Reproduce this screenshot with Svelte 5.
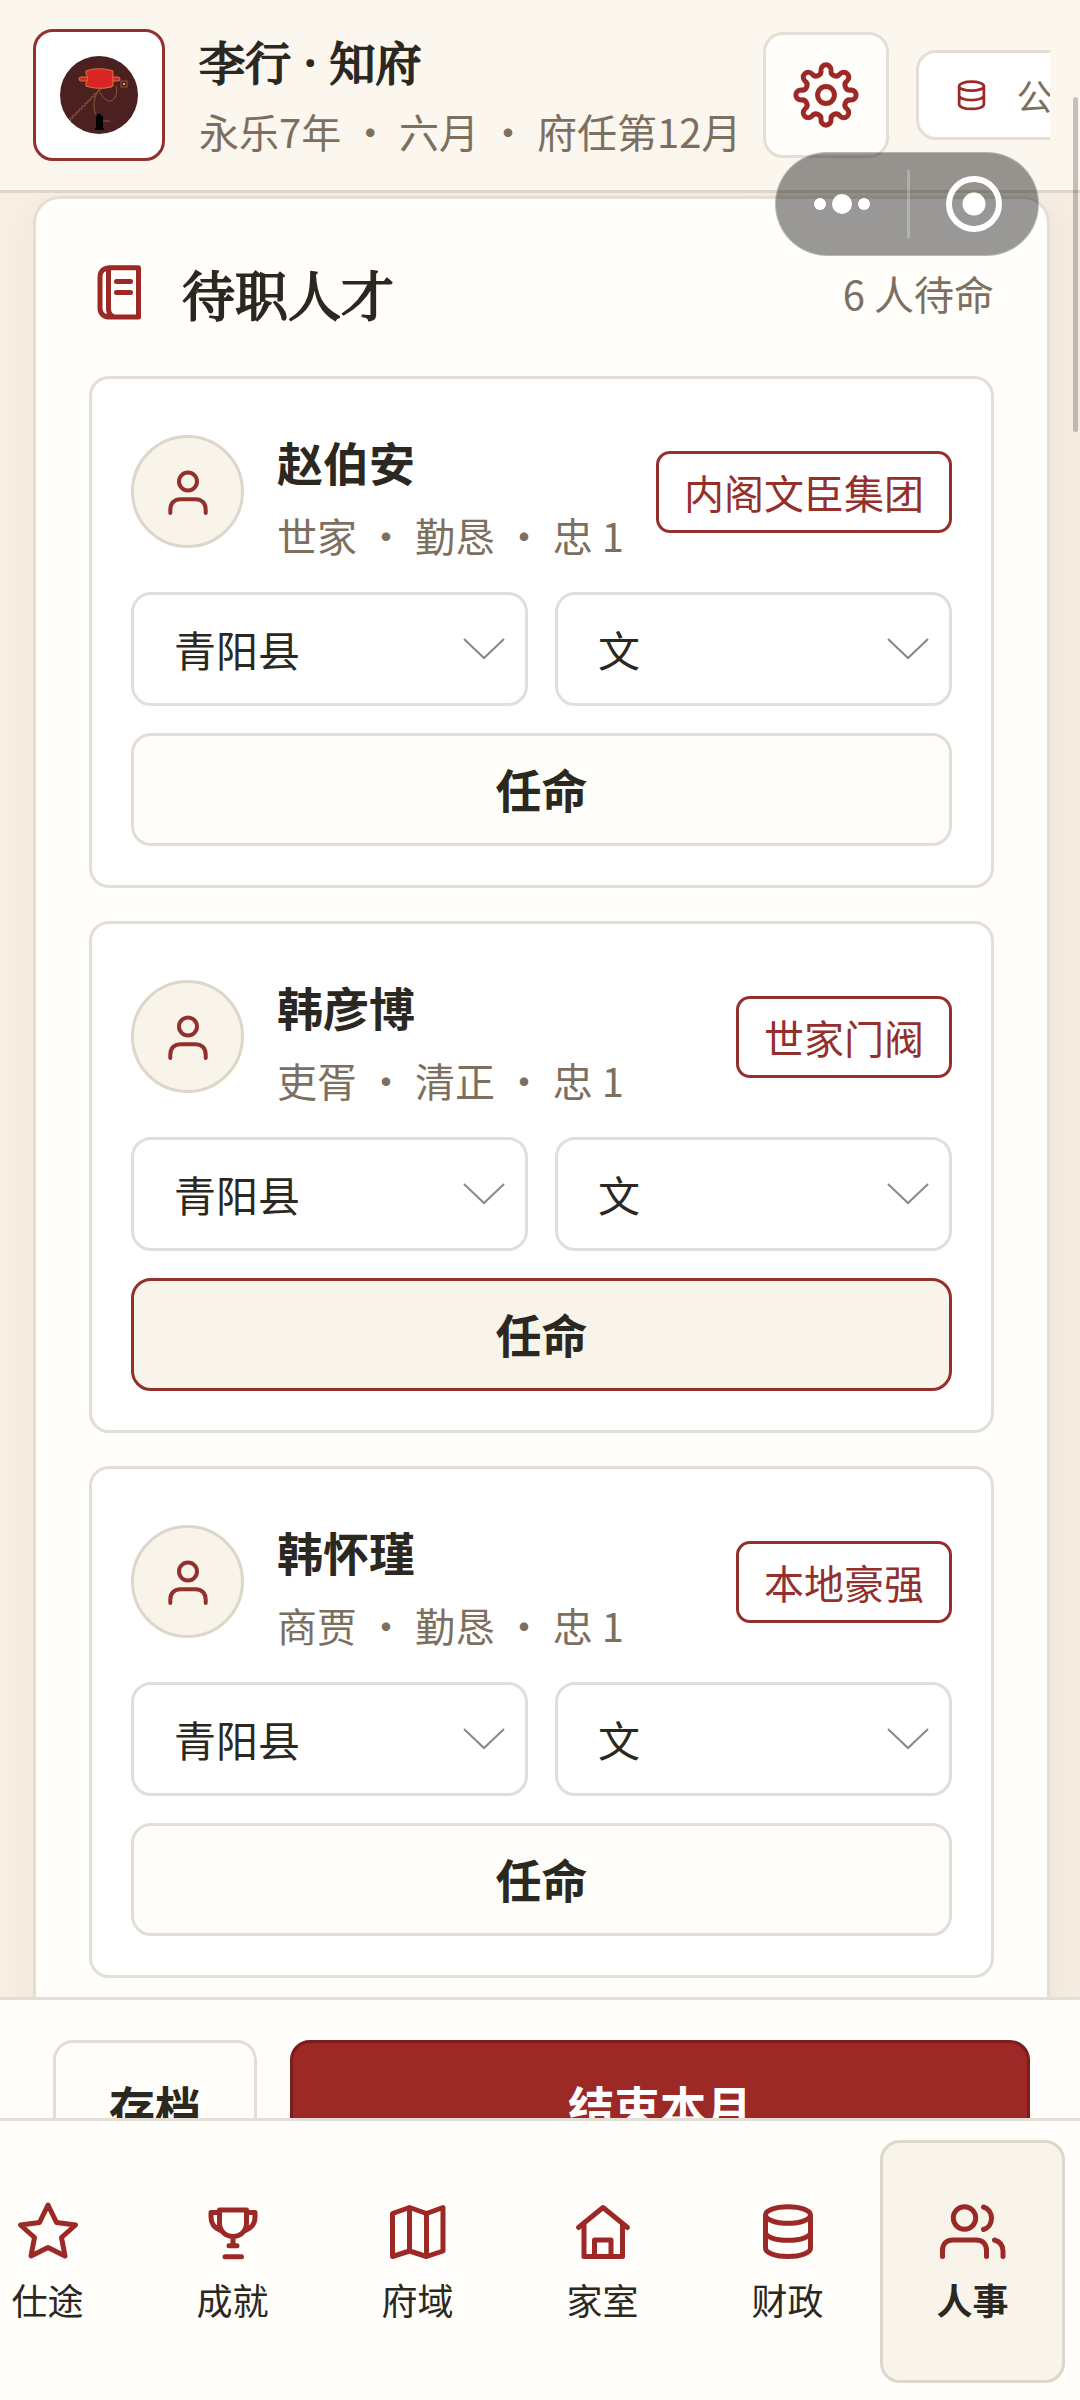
<script lang="ts">
    type Talent = {
        id: string;
        name: string;
        meta: string[];
        faction: string;
        county: string;
        post: string;
        highlighted: boolean;
    };

    let talents: Talent[] = [
        { id: 'zhao', name: '赵伯安', meta: ['世家', '勤恳', '忠 1'], faction: '内阁文臣集团', county: '青阳县', post: '文', highlighted: false },
        { id: 'han-yb', name: '韩彦博', meta: ['吏胥', '清正', '忠 1'], faction: '世家门阀', county: '青阳县', post: '文', highlighted: true },
        { id: 'han-hj', name: '韩怀瑾', meta: ['商贾', '勤恳', '忠 1'], faction: '本地豪强', county: '青阳县', post: '文', highlighted: false },
    ];
    let waiting = 6;

    let tabs = [
        { label: '仕途', icon: 'star' },
        { label: '成就', icon: 'trophy' },
        { label: '府域', icon: 'map' },
        { label: '家室', icon: 'house' },
        { label: '财政', icon: 'coins' },
        { label: '人事', icon: 'people' },
    ];
    let activeTab = '人事';

    // eight round teeth joined by round valleys
    function gearPath() {
        const tooth = 25.5;
        const valley = 26.1;
        const at = (r: number, deg: number) => {
            const a = (deg * Math.PI) / 180;
            return [33 + r * Math.cos(a), 33 + r * Math.sin(a)];
        };
        const mid = (a: number[], b: number[]) => ((a[0] + b[0]) / 2).toFixed(2) + ' ' + ((a[1] + b[1]) / 2).toFixed(2);
        let d = '';
        for (let i = 0; i < 8; i++) {
            const t = at(tooth, i * 45);
            const before = mid(t, at(valley, i * 45 - 22.5));
            const after = mid(t, at(valley, i * 45 + 22.5));
            d += (i == 0 ? 'M' + before : 'A5 5 0 0 0 ' + before) + 'A5 5 0 1 1 ' + after;
        }
        const first = mid(at(tooth, 0), at(valley, -22.5));
        return d + 'A5 5 0 0 0 ' + first + 'z';
    }

    const icons: Record<string, string> = {
        star: 'M33 6 41.5 23.5 60.5 26 46.5 38.5 50 57 33 48.5 16 57 19.5 38.5 5.5 26 24.5 23.5z',
        trophy: 'M19.5 11h27v13c0 8-6 13.5-13.5 13.5S19.5 32 19.5 24z M19.5 13.5H11V18c0 7 3.5 11 9.5 13.5 M46.5 13.5H55V18c0 7-3.5 11-9.5 13.5 M33 38v8 M29 46.7h8 M25 57.7h16.5',
        map: 'M7.5 14.5 24.5 8.5 41.5 14.5 58 8.5V52L41.5 57.5 24.5 52 7.5 57.5z M24.5 8.5V52 M41.5 14.5v43',
        house: 'M8.5 28.5 33 8.5l24.5 20 M14 25v32.5h38.5V25 M24.5 57V41H41v16',
        coins: 'M10.5 16c0-4.6 10-8.2 22.5-8.2S55.5 11.4 55.5 16 45.5 24.3 33 24.3 10.5 20.6 10.5 16v33c0 5 10 8.5 22.5 8.5S55.5 54 55.5 49V16 M10.5 33c0 5 10 8.3 22.5 8.3S55.5 38 55.5 33',
        people: 'M24.5 7.8a11.2 11.2 0 1 1 0 22.4a11.2 11.2 0 1 1 0-22.4 M2.5 57.5v-6C2.5 44.5 7 41 13 41h23c6 0 10.5 3.5 10.5 10.5v6 M43.5 8c5 1.5 8 6 8 11.2S48.5 29 43.5 30.5 M54.5 41c5 1.5 8.5 5 8.5 11v5.5',
        book: 'M52.5 7.7H24c-6 0-10 3.5-10 9V48c0 6 4 9 10 9h28.5z M22.5 9v39c0 4 1 7 4 8 M30.5 21.5h14 M30.5 32.5h14',
        gear: gearPath() + ' M33 24.6a8.4 8.4 0 1 1 0 16.8a8.4 8.4 0 1 1 0-16.8',
    };
</script>

{#snippet icon(name)}
    <svg class="icon" viewBox="3 3 60 60" aria-hidden="true"><path d={icons[name]} /></svg>
{/snippet}

<div class="app">
    <header class="top-bar">
        <div class="top-inner">
            <div class="portrait">
                <svg viewBox="0 0 78 78" aria-hidden="true">
                    <circle cx="39" cy="39" r="39" fill="#4a2021" />
                    <g fill="none" stroke="#8c5a3a" stroke-width="1">
                        <path d="M39 33l-2 4-3 1v3h-3v3h-3v3h-3v3h-3v3h-3v3h-3v3h-3v3h-3l1 3" />
                        <path d="M39 33c2 8 8 13 12 12s7-8 5-15" />
                        <path d="M38 35c-5 8-5 18-2 24M43 65h7M40 33l12-2" />
                        <rect x="61" y="25" width="6" height="6" />
                    </g>
                    <rect x="63" y="27" width="2" height="2" fill="#e0a95a" />
                    <g fill="#d92625" stroke="#d9763c" stroke-width="1">
                        <rect x="19" y="21" width="41" height="4" rx="2" />
                        <path d="M26 15c8-3 19-3 27 0v15c-8 3-19 3-27 0v-3c2-3 2-6 0-9z" />
                    </g>
                    <path d="M37 58h4v2h2v12h1v2h-9v-2h1V60h1z" fill="#000" />
                </svg>
            </div>
            <div class="ruler">
                <h1>李行 · 知府</h1>
                <p class="muted">永乐7年 • 六月 • 府任第12月</p>
            </div>
            <div class="top-tools">
                <button class="settings" aria-label="设置">{@render icon('gear')}</button>
                <div class="funds">
                    {@render icon('coins')}
                    <span>公</span>
                </div>
            </div>
        </div>
    </header>

    <main>
        <section class="panel">
            <div class="panel-head">
                {@render icon('book')}
                <h2>待职人才</h2>
                <span class="muted">{waiting} 人待命</span>
            </div>
            <div class="talents">
                {#each talents as talent}
                    <article class="card">
                        <div class="card-head">
                            <div class="face">
                                <svg viewBox="0 0 48 48" aria-hidden="true">
                                    <circle cx="24" cy="13.5" r="9" />
                                    <path d="M6.3 45v-3c0-7 4-10.8 10.5-10.8h14.4c6.5 0 10.5 3.8 10.5 10.8v3" />
                                </svg>
                            </div>
                            <div class="who">
                                <h3>{talent.name}</h3>
                                <p class="muted">{talent.meta.join(' • ')}</p>
                            </div>
                            <span class="tag">{talent.faction}</span>
                        </div>
                        <div class="choices">
                            <div class="choice">
                                <select id={'county-' + talent.id} aria-label="县" bind:value={talent.county}>
                                    <option>青阳县</option>
                                </select>
                                <svg viewBox="0 0 42 22" aria-hidden="true"><path d="M1 1l20 19L41 1" /></svg>
                            </div>
                            <div class="choice">
                                <select id={'post-' + talent.id} aria-label="职" bind:value={talent.post}>
                                    <option>文</option>
                                </select>
                                <svg viewBox="0 0 42 22" aria-hidden="true"><path d="M1 1l20 19L41 1" /></svg>
                            </div>
                        </div>
                        <button class="appoint" class:highlighted={talent.highlighted}>任命</button>
                    </article>
                {/each}
            </div>
        </section>
    </main>

    <div class="actions">
        <button class="save">存档</button>
        <button class="end-month">结束本月</button>
    </div>

    <nav>
        {#each tabs as tab}
            <button class="tab" class:active={tab.label == activeTab} on:click={() => activeTab = tab.label}>
                {@render icon(tab.icon)}
                <span>{tab.label}</span>
            </button>
        {/each}
    </nav>

    <div class="capsule">
        <button class="more" aria-label="更多"><i></i><i></i><i></i></button>
        <button class="close" aria-label="关闭"><i></i></button>
    </div>
    <div class="scroll-thumb"></div>
</div>

<style>
    :global(body) {
        background: #f6eee1;
    }

    .app {
        position: relative;
        display: flex;
        flex-direction: column;
        height: 100vh;
        overflow: hidden;
        color: #2b2822;
        background: linear-gradient(90deg, #f8efe1, #f5ede1);
        font-family: "Noto Sans CJK SC", sans-serif;
        font-size: 40px;
    }

    .app :global(*) {
        box-sizing: border-box;
    }

    h1, h2, h3, p {
        margin: 0;
        white-space: nowrap;
    }

    /* regular serif thickened evenly, so the thin strokes stay readable */
    h1, h2 {
        font-family: "Noto Serif CJK SC", "Noto Sans CJK SC", serif;
        font-weight: 400;
        -webkit-text-stroke: 2px #2b2822;
    }

    button {
        margin: 0;
        padding: 0;
        color: inherit;
        font-family: inherit;
    }

    .muted {
        color: #7d6f60;
        font-size: 40px;
        line-height: 60px;
    }

    .icon {
        flex: none;
        width: 60px;
        height: 60px;
        overflow: visible;
        fill: none;
        stroke: #9d2927;
        stroke-width: 5;
        stroke-linecap: round;
        stroke-linejoin: round;
    }

    .top-bar {
        flex: none;
        position: relative;
        z-index: 1;
        padding: 29px 30px 29px 33px;
        background: #fbf6ee;
        border-bottom: 3px solid #ddd6c9;
    }

    .top-inner {
        display: flex;
        align-items: center;
        gap: 22px;
        overflow: hidden;
    }

    .portrait {
        flex: none;
        display: grid;
        place-items: center;
        width: 132px;
        height: 132px;
        margin-right: 12px;
        background: white;
        border: 3px solid #93302c;
        border-radius: 20px;
    }

    .portrait svg {
        width: 78px;
        height: 78px;
    }

    .ruler {
        flex: none;
    }

    h1 {
        margin-bottom: 10px;
        font-size: 46px;
        line-height: 62px;
    }

    .top-tools {
        flex: none;
        display: flex;
        align-items: center;
        gap: 27px;
    }

    .settings {
        display: grid;
        place-items: center;
        width: 126px;
        height: 126px;
        background: #fffefa;
        border: 3px solid #e3ded6;
        border-radius: 20px;
    }

    .funds {
        display: flex;
        align-items: center;
        gap: 28px;
        width: 240px;
        height: 90px;
        padding-left: 36px;
        color: #7d6f60;
        font-size: 36px;
        background: white;
        border: 3px solid #e3ded6;
        border-radius: 20px;
    }

    .funds :global(.icon) {
        width: 33px;
        height: 33px;
    }

    main {
        flex: 1;
        min-height: 0;
        padding: 3px 30px 0 33px;
        overflow: hidden;
    }

    .panel {
        padding: 54px 53px;
        background: #fffefa;
        border: 3px solid #e3dfd7;
        border-radius: 27px;
        box-shadow: 0 12px 36px rgba(70, 50, 20, 0.05);
    }

    .panel-head {
        display: flex;
        align-items: center;
        gap: 33px;
        height: 80px;
        margin-bottom: 43px;
    }

    .panel-head .muted {
        margin-left: auto;
    }

    h2 {
        font-size: 53px;
        line-height: 80px;
    }

    .talents {
        display: grid;
        gap: 33px;
    }

    .card {
        display: grid;
        gap: 27px;
        padding: 39px;
        background: white;
        border: 3px solid #e2dfda;
        border-radius: 20px;
    }

    .card-head {
        display: flex;
        align-items: center;
        gap: 33px;
    }

    .face {
        flex: none;
        display: grid;
        place-items: center;
        width: 113px;
        height: 113px;
        background: #f9f4ea;
        border: 3px solid #ddd6cb;
        border-radius: 50%;
    }

    .face svg {
        width: 48px;
        height: 48px;
        fill: none;
        stroke: #93302c;
        stroke-width: 4;
        stroke-linecap: round;
    }

    h3 {
        font-size: 46px;
        font-weight: 700;
        line-height: 87px;
    }

    .tag {
        flex: none;
        margin-left: auto;
        padding: 8px 25px;
        color: #93302c;
        line-height: 60px;
        border: 3px solid #93302c;
        border-radius: 14px;
    }

    /* the meta line may run up against the tag */
    .who {
        min-width: 0;
    }

    .choices {
        display: grid;
        grid-template-columns: 1fr 1fr;
        gap: 27px;
    }

    .choice {
        display: grid;
        align-items: center;
    }

    .choice > * {
        grid-area: 1 / 1;
    }

    select {
        width: 100%;
        height: 114px;
        padding: 0 40px 2px;
        color: inherit;
        font-family: inherit;
        font-size: 42px;
        background: white;
        border: 3px solid #e2dfda;
        border-radius: 20px;
        appearance: none;
    }

    .choice svg {
        justify-self: end;
        width: 42px;
        height: 22px;
        margin-right: 23px;
        fill: none;
        stroke: #888;
        stroke-width: 2;
        pointer-events: none;
    }

    .appoint, .save, .end-month {
        font-size: 46px;
        font-weight: 700;
        background: #fffdf9;
        border: 3px solid #e3ddd7;
        border-radius: 20px;
    }

    .appoint {
        height: 113px;
        padding-bottom: 4px;
    }

    .appoint.highlighted {
        background: #f9f4ea;
        border-color: #93302c;
    }

    .actions {
        flex: none;
        display: flex;
        align-items: flex-start;
        gap: 33px;
        height: 121px;
        padding: 40px 50px 0 53px;
        overflow: hidden;
        background: #fffefa;
        border-top: 3px solid #e3dfd7;
    }

    .save, .end-month {
        flex: none;
        height: 130px;
    }

    .save {
        width: 204px;
    }

    .end-month {
        flex: 1;
        color: white;
        background: #9d2927;
        border-color: #7c1c1c;
    }

    nav {
        flex: none;
        display: flex;
        justify-content: flex-end;
        padding: 19px 15px 17px;
        overflow: hidden;
        background: #fffefa;
        border-top: 3px solid #e3dfd7;
    }

    .tab {
        flex: none;
        display: flex;
        flex-direction: column;
        align-items: center;
        justify-content: center;
        gap: 14px;
        width: 185px;
        height: 243px;
        font-size: 36px;
        line-height: 46px;
        background: none;
        border: 3px solid transparent;
        border-radius: 20px;
    }

    .tab.active {
        font-weight: 700;
        background: #f9f4ea;
        border-color: #ddd6cb;
    }

    /* floating host controls over the page */
    .capsule {
        position: absolute;
        z-index: 2;
        top: 152px;
        right: 41px;
        display: grid;
        grid-template-columns: 134px 1fr;
        align-items: center;
        width: 264px;
        height: 104px;
        background: rgba(0, 0, 0, 0.4);
        border: 1px solid rgba(255, 255, 255, 0.3);
        border-radius: 52px;
    }

    .capsule button {
        display: flex;
        align-items: center;
        justify-content: center;
        gap: 6px;
        height: 68px;
        background: none;
        border: none;
    }

    .capsule .more {
        border-right: 3px solid rgba(255, 255, 255, 0.25);
    }

    .more i {
        flex: none;
        width: 12px;
        height: 12px;
        background: white;
        border-radius: 50%;
    }

    .more i:nth-child(2) {
        width: 20px;
        height: 20px;
    }

    .close i {
        width: 56px;
        height: 56px;
        background: radial-gradient(circle, white 11px, transparent 12px);
        border: 6px solid white;
        border-radius: 50%;
    }

    .scroll-thumb {
        position: absolute;
        z-index: 2;
        top: 97px;
        right: 2px;
        width: 5px;
        height: 335px;
        background: rgba(0, 0, 0, 0.22);
        border-radius: 3px;
    }
</style>
